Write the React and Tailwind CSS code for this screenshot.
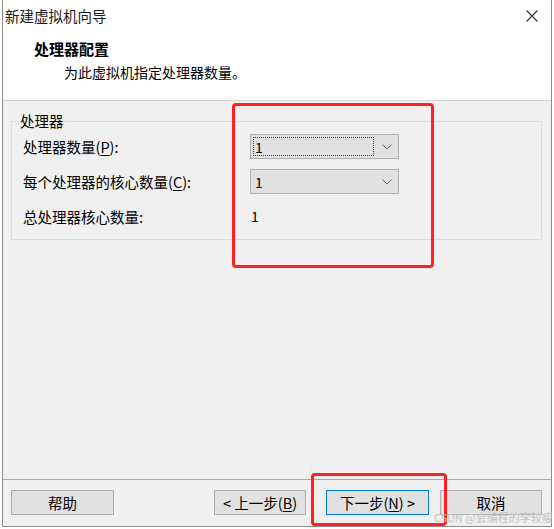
export default function App() {
  const Chevron = () => (
    <svg width="10" height="6" viewBox="0 0 10 6" className="block">
      <polyline points="0.5,0.5 5,5 9.5,0.5" fill="none" stroke="#606060" strokeWidth="1" />
    </svg>
  );
  return (
    <div className="relative w-[554px] h-[529px] bg-white overflow-hidden font-['Noto_Sans_CJK_SC','Noto_Sans',sans-serif] text-black">
      <div className="ml-[2px] w-[550px] h-[527px] border-x border-b border-[#8c8c8c] flex flex-col">
        {/* header */}
        <div className="h-[101px] shrink-0 bg-white border-b border-[#d4d4d4]">
          <div className="h-[31px] flex items-center justify-between pl-[2px] pr-[13px]">
            <span className="text-[14.5px] leading-[20px] text-[#1a1a1a]">新建虚拟机向导</span>
            <svg width="12" height="12" viewBox="0 0 12 12" className="block">
              <path d="M0.5 0.5 L11.5 11.5 M11.5 0.5 L0.5 11.5" stroke="#333" strokeWidth="1.1" fill="none" />
            </svg>
          </div>
          <div className="mt-[8px] pl-[31px] text-[15px] leading-[20px] font-bold">处理器配置</div>
          <div className="mt-[3px] pl-[61px] text-[14px] leading-[20px]">为此虚拟机指定处理器数量。</div>
        </div>
        {/* body */}
        <div className="flex-1 bg-[#f0f0f0]">
          <fieldset className="mt-[10px] ml-[8px] w-[531px] h-[129px] border border-[#dcdcdc] pl-[7px] pb-[10px]">
            <legend className="px-[1px] text-[14.5px] leading-[20px]">处理器</legend>
            <div className="mt-[3px] pl-[4px] flex flex-col gap-[10px] text-[14.5px]">
              <div className="h-[25px] flex items-center">
                <div className="w-[227px]">
                  处理器数量(<span className="underline underline-offset-2">P</span>):
                </div>
                <div className="w-[149px] h-[25px] bg-[#e1e1e1] border border-[#adadad] flex items-center pl-[2px] pr-[6px]">
                  <div className="flex-1 h-[19px] border border-dotted border-[#404040] flex items-center pl-[1px] text-[14px] leading-none mr-[8px]">1</div>
                  <Chevron />
                </div>
              </div>
              <div className="h-[25px] flex items-center">
                <div className="w-[227px]">
                  每个处理器的核心数量(<span className="underline underline-offset-2">C</span>):
                </div>
                <div className="w-[149px] h-[25px] bg-[#e1e1e1] border border-[#adadad] flex items-center pl-[4px] pr-[6px]">
                  <div className="flex-1 text-[14px] leading-none">1</div>
                  <Chevron />
                </div>
              </div>
              <div className="h-[25px] flex items-center">
                <div className="w-[227px]">总处理器核心数量:</div>
                <div className="pl-[1px] text-[14px]">1</div>
              </div>
            </div>
          </fieldset>
        </div>
        {/* footer */}
        <div className="h-[47px] shrink-0 bg-[#f0f0f0] border-t border-[#a8a8a8] pt-[10px] pl-[8px] flex items-start text-[14.5px]">
          <button className="w-[103px] h-[25px] bg-[#e1e1e1] border border-[#adadad] flex items-center justify-center">帮助</button>
          <button className="ml-[100px] w-[92px] h-[25px] bg-[#e1e1e1] border border-[#adadad] flex items-center justify-center">
            &lt; 上一步(<span className="underline underline-offset-2">B</span>)
          </button>
          <button className="ml-[20px] w-[103px] h-[25px] bg-[#e1e1e1] border-[1.5px] border-[#0078d7] flex items-center justify-center">
            下一步(<span className="underline underline-offset-2">N</span>) &gt;
          </button>
          <button className="ml-[11px] w-[102px] h-[25px] bg-[#e1e1e1] border border-[#adadad] flex items-center justify-center">取消</button>
        </div>
      </div>

      {/* annotations */}
      <div className="absolute left-[232px] top-[103px] w-[202px] h-[165px] border-[3px] border-[#ff2121] rounded-[4px]" />
      <div className="absolute left-[311px] top-[473px] w-[136px] h-[53px] border-[3px] border-[#ff2121] rounded-[4px]" />
      <div className="absolute left-[434px] top-[510px] text-[11px] leading-[14px] text-[#c4c4c4] whitespace-nowrap">CSDN @会编程的李较瘦</div>
    </div>
  );
}
